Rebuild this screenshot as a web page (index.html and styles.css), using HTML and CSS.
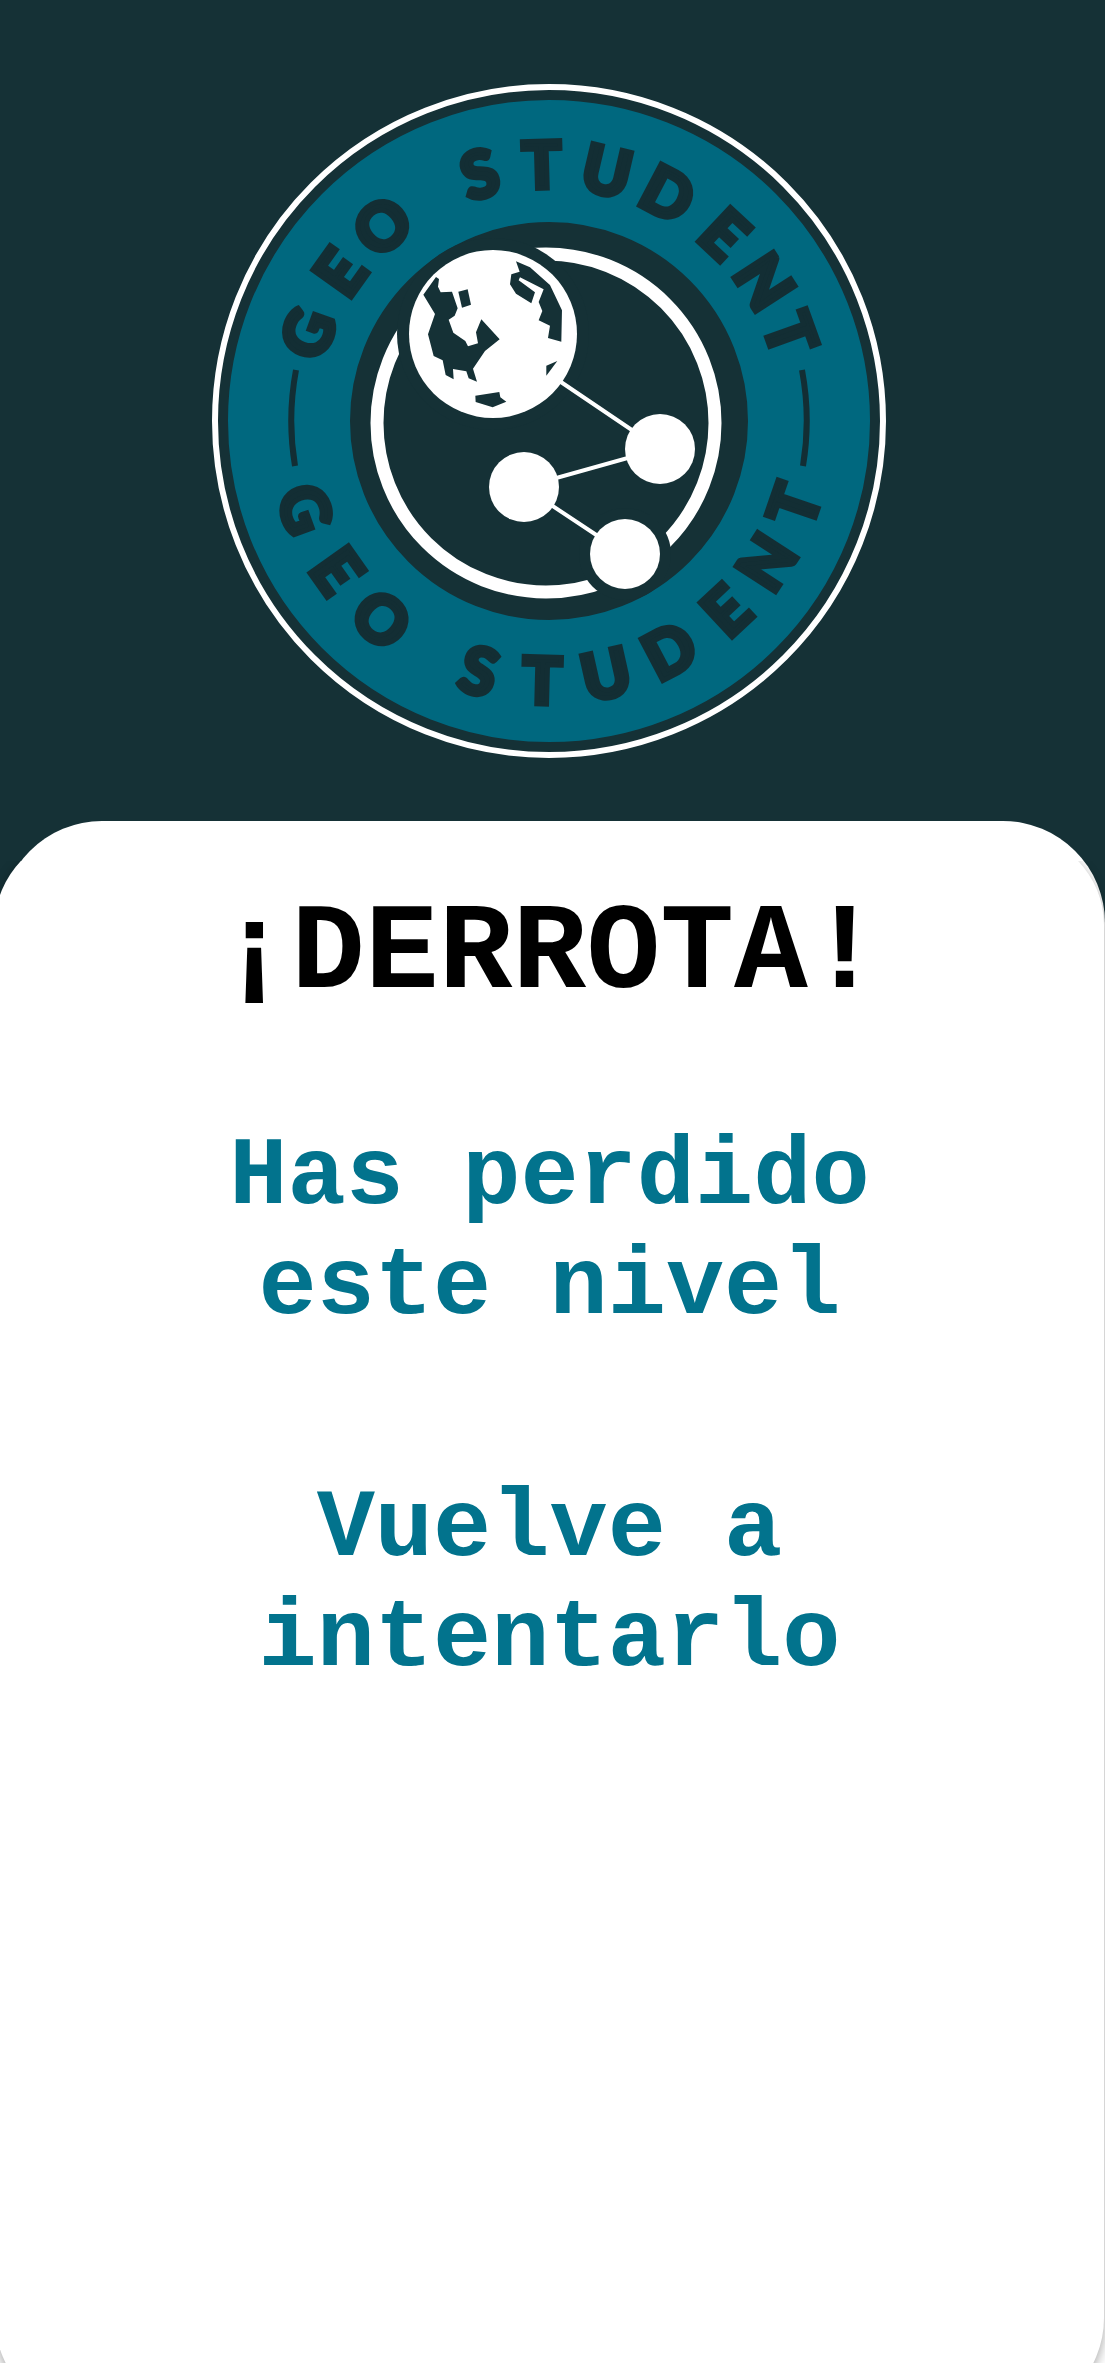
FILE: index.html
```html
<!DOCTYPE html>
<html lang="es">
<head>
<meta charset="utf-8">
<meta name="viewport" content="width=device-width, initial-scale=1">
<title>Geo Student</title>
<link rel="stylesheet" href="styles.css">
</head>
<body>
<div class="screen">
  <header class="brand">
    <svg class="logo" viewBox="208 80 682 682" role="img" aria-label="Geo Student">
      <defs>
        <path id="arc-top" d="M316 421A233 233 0 0 1 782 421"/>
        <path id="arc-bottom" d="M266 421A283 283 0 0 0 832 421"/>
      </defs>
      <circle class="line" cx="549" cy="421" r="334" stroke-width="6"/>
      <circle class="band" cx="549" cy="421" r="260" stroke-width="122"/>
      <path class="tick" d="M296 370Q287 418 295 466M802 370Q811 418 803 466"/>
      <text class="motto"><textPath href="#arc-top"><tspan x="81 144 201 250 302 359 419 478 541 598 651">GEO STUDENT</tspan></textPath></text>
      <text class="motto"><textPath href="#arc-bottom"><tspan x="98 174 246 305 367 437 507 581 657 726 795">GEO STUDENT</tspan></textPath></text>
      <circle class="line" cx="546" cy="423" r="169" stroke-width="13"/>
      <circle class="dark" cx="493" cy="334" r="96"/>
      <circle class="dark" cx="625" cy="554" r="46"/>
      <path class="line" d="M555 378L660 449L524 487L625 554" stroke-width="4"/>
      <circle class="light" cx="493" cy="334" r="84"/>
      <circle class="light" cx="660" cy="449" r="35"/>
      <circle class="light" cx="524" cy="487" r="35"/>
      <circle class="light" cx="625" cy="554" r="35"/>
      <g class="dark" transform="translate(390 235) scale(.3333)">
        <path d="M138 126L147 132L144 155L152 172L186 170L203 220L194 242L176 254L190 293L226 318L234 334L264 325L258 292L274 253L329 313L285 348L249 401L261 440L236 430L229 409L189 402L191 433L167 420L158 376L131 363L114 298L135 237L100 179Z"/>
        <path d="M205 170L233 163L243 209L216 218Z"/>
        <path d="M378 79L420 97L480 150L516 226L514 320L474 309L480 272L446 256L457 228L446 201L461 163L390 127L386 136L435 172L424 205L378 176L360 148L364 118L389 110Z"/>
        <path d="M469 392L502 378L469 422Z"/>
        <path d="M256 482L328 471L331 487L349 500L308 517L257 501Z"/>
      </g>
    </svg>
  </header>
  <main class="sheet">
    <section class="card">
      <h1 class="title">¡DERROTA!</h1>
      <div class="messages">
        <p class="message">Has perdido este nivel</p>
        <p class="message">Vuelve a intentarlo</p>
      </div>
    </section>
  </main>
</div>
</body>
</html>
```
FILE: styles.css
```css
* {
  box-sizing: border-box;
}

body {
  margin: 0;
  background: #fff;
  font-family: "Liberation Mono", "Courier New", monospace;
}

.screen {
  display: flex;
  flex-direction: column;
  min-height: 100vh;
  overflow: hidden;
}

.brand {
  display: flex;
  justify-content: center;
  padding: 80px 7px 163px 0;
  background: #153136;
}

.logo {
  display: block;
  width: 682px;
  max-width: 100%;
}

.line {
  fill: none;
  stroke: #fff;
}

.band {
  fill: none;
  stroke: #00687f;
}

.tick {
  fill: none;
  stroke: #132e34;
  stroke-width: 6px;
}

.light {
  fill: #fff;
}

.dark {
  fill: #153136;
}

.motto {
  fill: #132e34;
  stroke: #132e34;
  stroke-width: 5px;
  font-family: Lato, sans-serif;
  font-size: 65px;
  font-weight: 900;
  text-anchor: middle;
}

.sheet {
  display: flex;
  flex: 1;
  flex-direction: column;
  margin-top: -104px;
  border-radius: 102px 102px 0 0;
  background: #fff;
}

.card {
  flex: 1;
  margin: 12px 1px -55px -5px;
  padding: 52px 40px;
  border-radius: 92px 92px 100px 100px;
  background: #fff;
  box-shadow: 0 4px 12px rgba(0, 0, 0, 0.35);
  clip-path: inset(28px -20px -20px 0);
  text-align: center;
}

.title {
  margin: 0;
  color: #000;
  font-size: 123px;
  line-height: 140px;
}

.messages {
  display: flex;
  flex-direction: column;
  align-items: center;
  gap: 132px;
  margin-top: 97px;
}

.message {
  max-width: 900px;
  margin: 0;
  color: #02738d;
  font-size: 97px;
  font-weight: 700;
  line-height: 110px;
}
```
